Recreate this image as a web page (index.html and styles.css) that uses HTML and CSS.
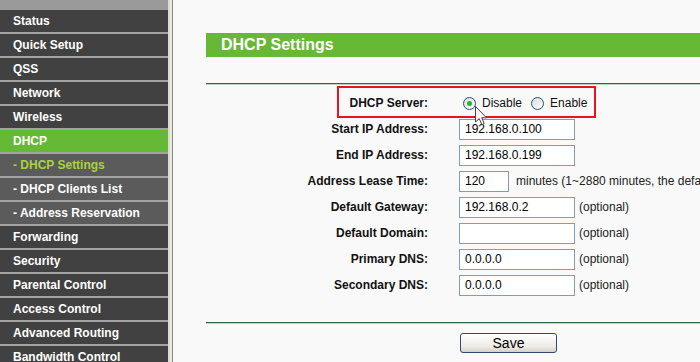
FILE: index.html
```html
<!DOCTYPE html>
<html lang="en">
<head>
    <meta charset="UTF-8">
    <title>DHCP Settings</title>
    <link rel="stylesheet" href="styles.css">
</head>
<body>
    <div class="menu">
        <div class="menu-top"></div>
        <div class="item">Status</div>
        <div class="item">Quick Setup</div>
        <div class="item">QSS</div>
        <div class="item">Network</div>
        <div class="item">Wireless</div>
        <div class="item ativo">DHCP</div>
        <div class="item sub atual">- DHCP Settings</div>
        <div class="item sub">- DHCP Clients List</div>
        <div class="item sub">- Address Reservation</div>
        <div class="item">Forwarding</div>
        <div class="item">Security</div>
        <div class="item">Parental Control</div>
        <div class="item">Access Control</div>
        <div class="item">Advanced Routing</div>
        <div class="item">Bandwidth Control</div>
    </div>
    <div class="divisor"></div>

    <div class="main">
        <div class="titulo">DHCP Settings</div>
        <div class="linha"></div>

        <div class="form">
            <div class="row">
                <label>DHCP Server:</label>
                <div class="campo">
                    <span class="radio checked"></span><span class="opcao">Disable</span>
                    <span class="radio"></span><span class="opcao">Enable</span>
                </div>
            </div>
            <div class="row">
                <label>Start IP Address:</label>
                <div class="campo"><input type="text" value="192.168.0.100"></div>
            </div>
            <div class="row">
                <label>End IP Address:</label>
                <div class="campo"><input type="text" value="192.168.0.199"></div>
            </div>
            <div class="row">
                <label>Address Lease Time:</label>
                <div class="campo"><input type="text" class="curto" value="120"><span class="nota">minutes (1~2880 minutes, the default value is 120)</span></div>
            </div>
            <div class="row">
                <label>Default Gateway:</label>
                <div class="campo"><input type="text" value="192.168.0.2"><span class="nota">(optional)</span></div>
            </div>
            <div class="row">
                <label>Default Domain:</label>
                <div class="campo"><input type="text" value=""><span class="nota">(optional)</span></div>
            </div>
            <div class="row">
                <label>Primary DNS:</label>
                <div class="campo"><input type="text" value="0.0.0.0"><span class="nota">(optional)</span></div>
            </div>
            <div class="row">
                <label>Secondary DNS:</label>
                <div class="campo"><input type="text" value="0.0.0.0"><span class="nota">(optional)</span></div>
            </div>

            <div class="destaque"></div>
            <svg class="cursor" width="13" height="20" viewBox="0 0 13 20">
                <path d="M0.5 0.5 L0.5 16 L4.2 12.6 L6.8 18.6 L9.2 17.6 L6.7 11.8 L11.6 11.8 Z" fill="#fff" stroke="#444" stroke-width="1"/>
            </svg>
        </div>

        <div class="linha rodape"></div>
        <div class="acoes">
            <button class="salvar">Save</button>
        </div>
    </div>
</body>
</html>
```

FILE: styles.css
```css
* { margin: 0; padding: 0; box-sizing: border-box; }
body { background-color: #f9f9f9; font-family: 'Liberation Sans', Arial, sans-serif; font-size: 12px; display: flex; height: 362px; overflow: hidden; }

.menu { width: 168px; flex-shrink: 0; background-color: #404040; }
.menu-top { height: 10px; background-color: #9a9a9a; }
.item { height: 24px; line-height: 22px; padding-left: 13px; border-bottom: 2px solid #a2a2a2; color: #fff; font-weight: bold; font-size: 12px; background-color: #414141; white-space: nowrap; }
.item.ativo { background-color: #66b934; }
.item.sub { background-color: #5b5b5b; }
.item.atual { color: #a8d23e; }

.divisor { width: 5px; flex-shrink: 0; border-left: 2px solid #dcdcdc; border-right: 1px solid #858585; background-color: #ece9d8; }

.main { flex: 1; padding: 33px 0 0 33px; min-width: 0; overflow: hidden; }
.titulo { height: 24px; line-height: 24px; padding-left: 15px; background-color: #67b835; color: #fff; font-weight: bold; font-size: 16px; }
.linha { margin-top: 26px; height: 2px; border-top: 1px solid #2b6a3c; background-color: #b9d7bf; }
.linha.rodape { margin-top: 24px; }

.form { position: relative; padding-top: 5px; }
.row { display: grid; grid-template-columns: 222px 1fr; column-gap: 31px; height: 26px; align-items: center; }
.row label { text-align: right; font-weight: bold; color: #111; white-space: nowrap; }
.campo { display: flex; align-items: center; white-space: nowrap; }
.campo input { width: 116px; height: 21px; border: 1px solid #7f9db9; background-color: #fff; padding: 0 5px; font-family: 'Liberation Sans', Arial, sans-serif; font-size: 12px; color: #000; outline: none; }
.campo input.curto { width: 50px; }
.nota { margin-left: 4px; color: #222; }
.campo input.curto + .nota { margin-left: 7px; }

.radio { width: 13px; height: 13px; border-radius: 50%; border: 1px solid #1d5281; background: linear-gradient(135deg, #dcdcd6, #ffffff); margin-left: 4px; display: flex; align-items: center; justify-content: center; }
.radio.checked::after { content: ''; width: 5px; height: 5px; border-radius: 50%; background-color: #2fae3a; }
.opcao { margin-left: 6px; margin-right: 3px; color: #111; }
.opcao + .radio { margin-left: 6px; }

.destaque { position: absolute; left: 131px; top: 1px; width: 259px; height: 32px; border: 2px solid #e5161e; }
.cursor { position: absolute; left: 269px; top: 21px; }

.acoes { display: grid; grid-template-columns: 222px 1fr; column-gap: 31px; padding-top: 9px; }
.salvar { grid-column: 2; margin-left: 1px; width: 97px; height: 20px; border: 1px solid #2e4a6e; border-radius: 3px; background: linear-gradient(#ffffff, #ecebe6 70%, #d6d0c5); font-family: 'Liberation Sans', Arial, sans-serif; font-size: 14px; color: #000; }
```
